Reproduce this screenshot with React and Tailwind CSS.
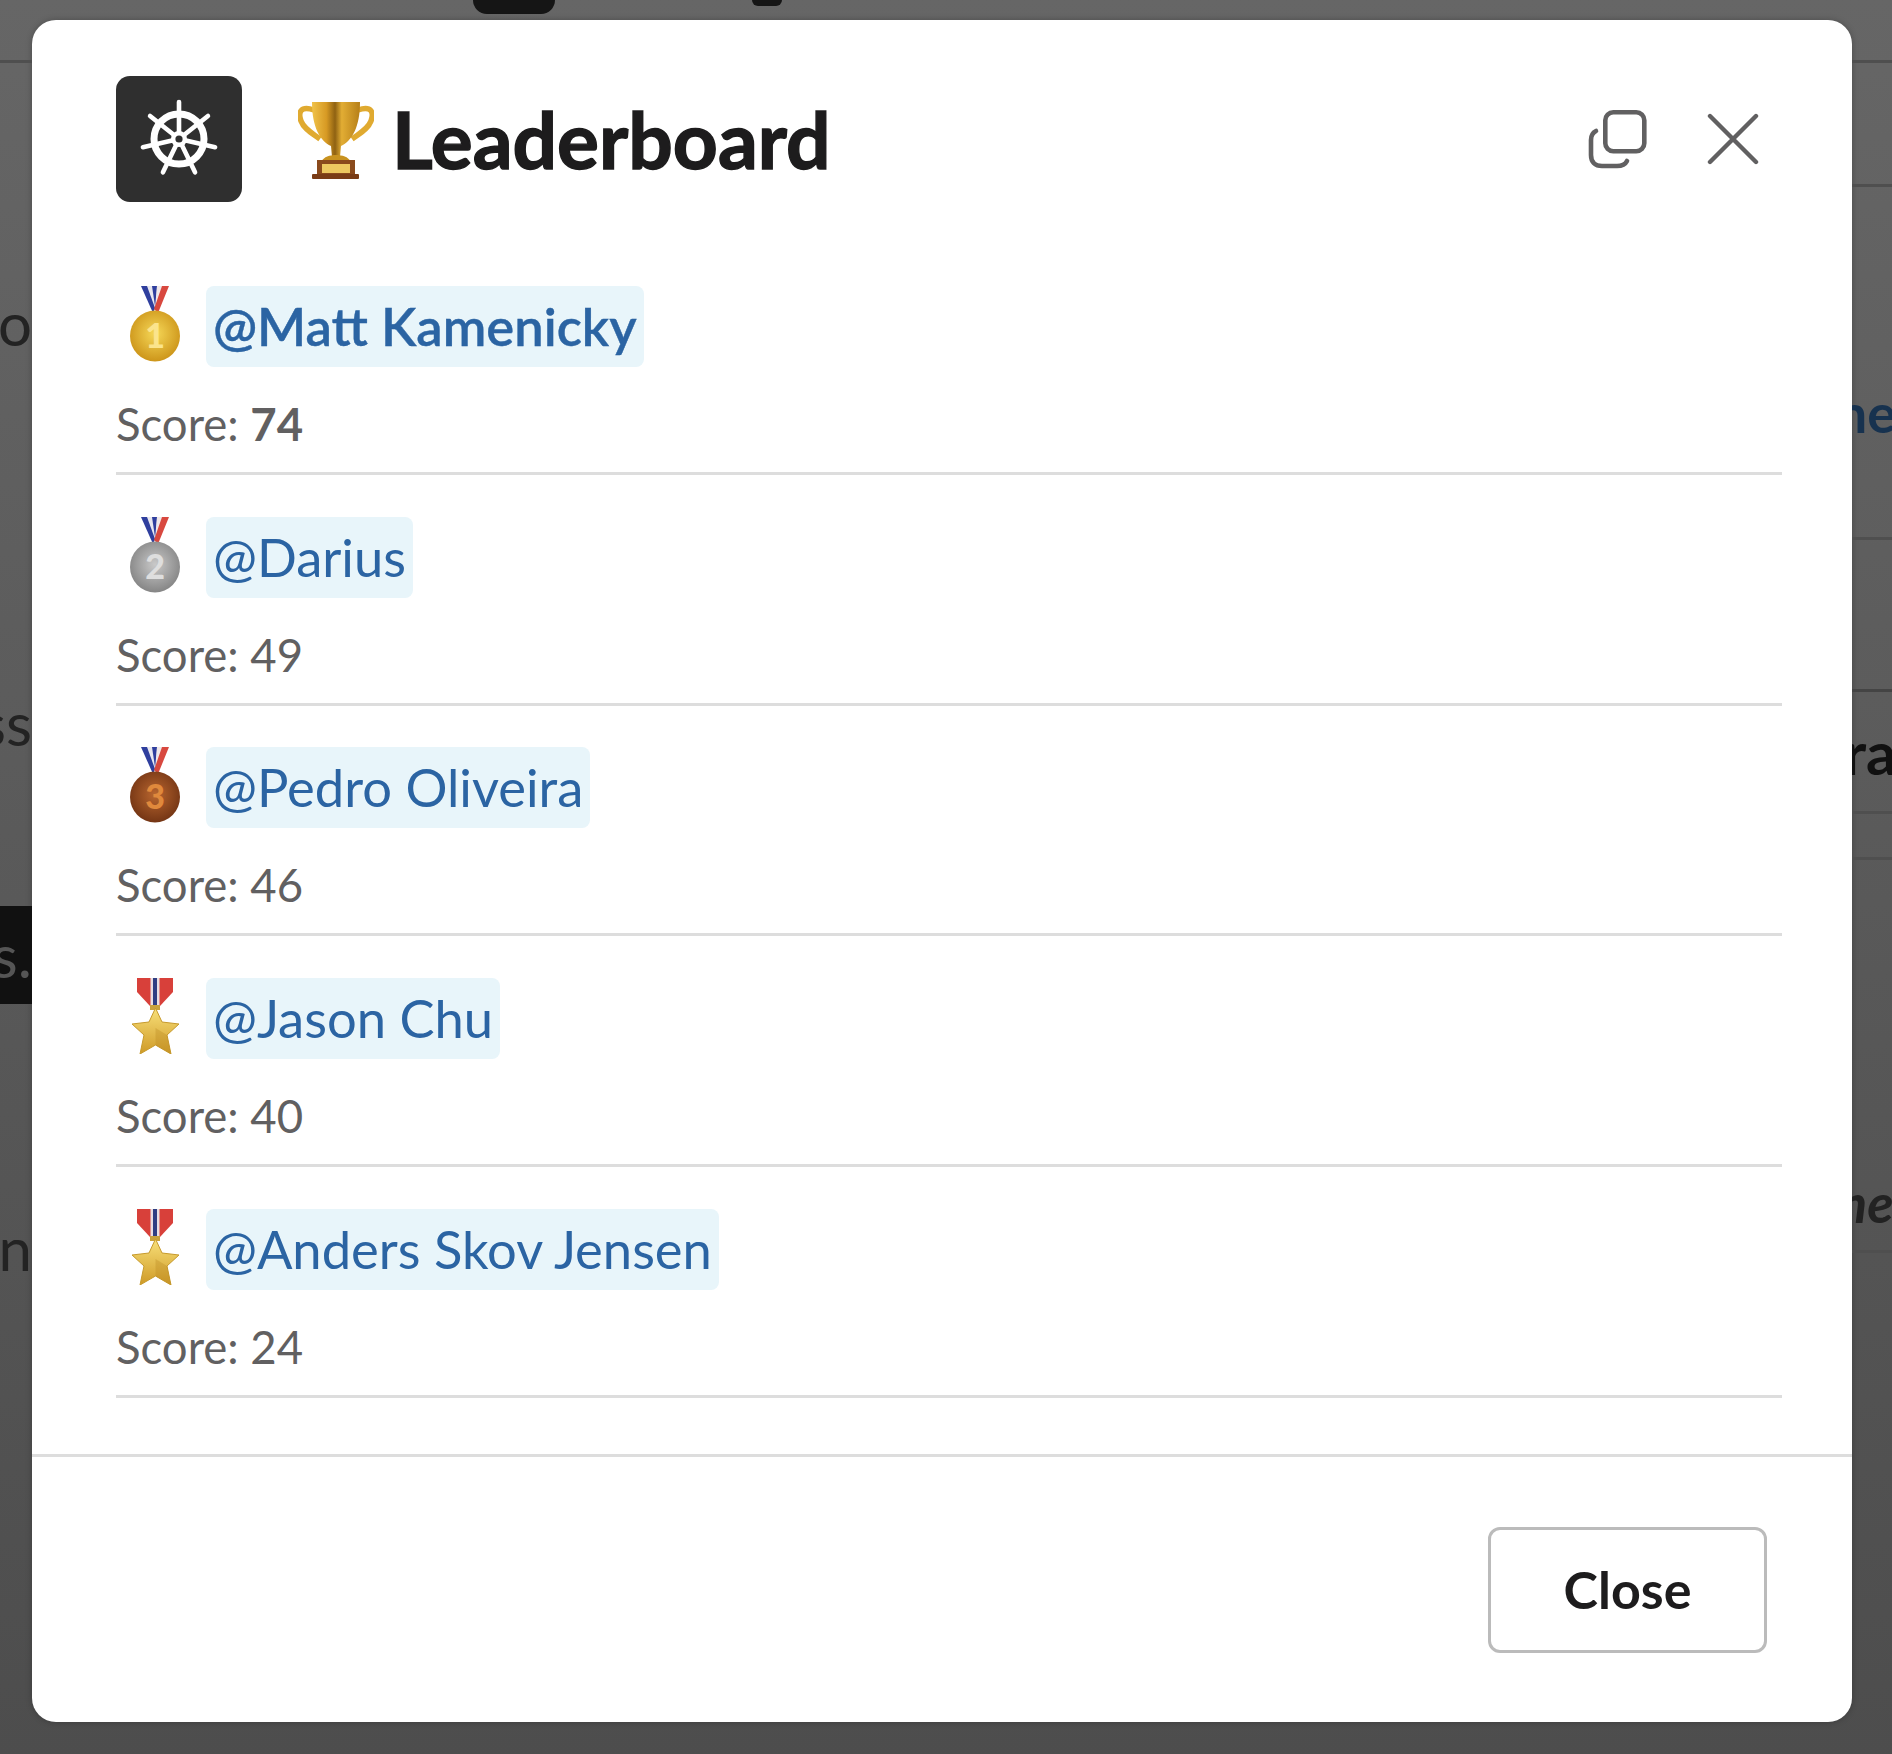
import React from 'react';

const players = [
  { name: 'Matt Kamenicky', score: 74, medal: 'gold', strong: true },
  { name: 'Darius', score: 49, medal: 'silver' },
  { name: 'Pedro Oliveira', score: 46, medal: 'bronze' },
  { name: 'Jason Chu', score: 40, medal: 'star' },
  { name: 'Anders Skov Jensen', score: 24, medal: 'star' },
];

const medalColors = {
  gold: { id: 'gold', hi: '#f6d858', lo: '#c98f14', num: '#fbe48c', label: '1' },
  silver: { id: 'silver', hi: '#c9c9c9', lo: '#7f7f7f', num: '#dedede', label: '2' },
  bronze: { id: 'bronze', hi: '#b9662f', lo: '#6e3112', num: '#e0893c', label: '3' },
};

function Medal({ type }) {
  const c = medalColors[type];
  return (
    <svg width="52" height="76" viewBox="0 0 52 76" className="shrink-0">
      <defs>
        <radialGradient id={c.id} cx="50%" cy="45%" r="60%">
          <stop offset="0%" stopColor={c.hi} />
          <stop offset="100%" stopColor={c.lo} />
        </radialGradient>
      </defs>
      <polygon points="12,0 19,0 27,20 24,27" fill="#2f3f9e" />
      <polygon points="18,0 23,0 28,18 26,22" fill="#e8e8f0" />
      <polygon points="23,0 28,0 27,20 26,20" fill="#2f3f9e" />
      <polygon points="28,0 33,0 28,20 26,22" fill="#f0e8e8" />
      <polygon points="33,0 40,0 29,27 25,23" fill="#d8483f" />
      <ellipse cx="26" cy="50" rx="25" ry="25.5" fill={`url(#${c.id})`} />
      <text x="26" y="62" textAnchor="middle" fontFamily="Lato, sans-serif" fontWeight="900" fontSize="34" fill={c.num}>
        {c.label}
      </text>
    </svg>
  );
}

function StarMedal({ id }) {
  return (
    <svg width="52" height="76" viewBox="0 0 52 76" className="shrink-0">
      <defs>
        <linearGradient id={id} x1="0" y1="0" x2="0" y2="1">
          <stop offset="0%" stopColor="#f8e07a" />
          <stop offset="100%" stopColor="#cf9a26" />
        </linearGradient>
      </defs>
      <polygon points="8,0 44,0 44,14 31,28 21,28 8,14" fill="#d8403a" />
      <rect x="21.5" y="0" width="9" height="28" fill="#e9dfe2" />
      <rect x="24" y="0" width="4" height="28" fill="#2f3f82" />
      <rect x="21" y="27" width="10" height="5" fill="#c9a23c" />
      <polygon
        points="26.5,30 33,44 50,46 38,57 42,76 26.5,67 11,76 15,57 3,46 20,44"
        fill={`url(#${id})`}
        stroke="#c79a2c"
        strokeWidth="1"
        strokeLinejoin="round"
      />
      <polygon points="26.5,50 38,57 42,76 26.5,67" fill="#b98a22" opacity="0.35" />
    </svg>
  );
}

function Wheel() {
  const spokes = [0, 51.43, 102.86, 154.29, 205.71, 257.14, 308.57];
  return (
    <svg width="82" height="82" viewBox="-41 -41 82 82">
      <circle r="25" fill="none" stroke="#fff" strokeWidth="7" />
      {spokes.map(a => (
        <g key={a} transform={`rotate(${a})`}>
          <line x1="0" y1="-6" x2="0" y2="-37" stroke="#fff" strokeWidth="4.6" strokeLinecap="round" />
        </g>
      ))}
      <circle r="8" fill="#fff" />
      <circle r="3.6" fill="#2f2f2f" />
    </svg>
  );
}

function Trophy() {
  return (
    <svg width="76" height="78" viewBox="0 0 76 78" className="shrink-0">
      <defs>
        <linearGradient id="cup" x1="0" y1="0" x2="1" y2="0">
          <stop offset="0%" stopColor="#f0c24a" />
          <stop offset="30%" stopColor="#d79a24" />
          <stop offset="48%" stopColor="#8f6212" />
          <stop offset="62%" stopColor="#e2ad34" />
          <stop offset="100%" stopColor="#b67f18" />
        </linearGradient>
      </defs>
      <path d="M16 9 C2 4 0 12 3 20 C6 28 14 32 22 38" fill="none" stroke="#e0aa30" strokeWidth="5.5" />
      <path d="M60 9 C74 4 76 12 73 20 C70 28 62 32 54 38" fill="none" stroke="#e0aa30" strokeWidth="5.5" />
      <path d="M14 1 H62 C62 26 54 40 43 45 L42 56 H34 L33 45 C22 40 14 26 14 1 Z" fill="url(#cup)" />
      <path d="M24 60 C27 52 49 52 52 60 Z" fill="#c8921f" />
      <rect x="19" y="59" width="38" height="15" fill="#8a4a1c" />
      <rect x="14" y="73" width="47" height="5" rx="1" fill="#7a3c16" />
      <rect x="24" y="63" width="28" height="9" fill="#edc860" />
    </svg>
  );
}

function CopyIcon() {
  return (
    <svg width="60" height="60" viewBox="0 0 60 60" fill="none" stroke="#616061" strokeWidth="4.6" strokeLinecap="round">
      <rect x="17.3" y="3.3" width="39" height="39" rx="8" />
      <path d="M8 22 C4 24 3 27 3 31 V46 C3 53 7 57 14 57 H29 C34 57 37 56 39 52" />
    </svg>
  );
}

function CloseIcon() {
  return (
    <svg width="52" height="52" viewBox="0 0 52 52" fill="none" stroke="#616061" strokeWidth="4.4" strokeLinecap="round" className="mt-[4px]">
      <path d="M3 3 L49 49 M49 3 L3 49" />
    </svg>
  );
}

function PlayerRow({ player, i }) {
  return (
    <div className="h-[189px] border-b-[3px] border-[#dddddd]">
      <div className="flex items-start gap-[25px] pl-[13px]">
        {player.medal === 'star' ? <StarMedal id={`star${i}`} /> : <Medal type={player.medal} />}
        <span className={`h-[81px] rounded-lg bg-[#e8f5fa] px-[7px] text-[52.5px] leading-[79px] text-[#2b64a3] ${player.strong ? 'font-semibold [-webkit-text-stroke:0.4px_#2b64a3]' : 'font-normal'}`}>
          @{player.name}
        </span>
      </div>
      <p className="mt-[27px] text-[45.5px] leading-[59px] text-[#616061]">
        Score: <span className={player.strong ? 'font-bold' : ''}>{player.score}</span>
      </p>
    </div>
  );
}

export default function App() {
  return (
    <div className="flex h-[1754px] w-[1892px] flex-col overflow-hidden bg-gradient-to-b from-[#666666] to-[#4d4d4d] font-['Lato',sans-serif]">
      {/* what shows of the page behind the dialog */}
      <div className="flex h-[20px] shrink-0 items-start pl-[473px]">
        <div className="h-[14px] w-[82px] rounded-b-[14px] bg-[#151515]" />
        <div className="ml-[197px] h-[6px] w-[30px] rounded-b-full bg-[#151515]" />
      </div>

      <div className="flex h-[1702px] shrink-0">
        <div className="flex w-[32px] shrink-0 flex-col items-end overflow-hidden text-[60px] leading-[70px] text-[#232323] blur-[0.6px]">
          <div className="mt-[40px] h-[3px] w-full shrink-0 bg-[#4f4f4f]" />
          <div className="mt-[225px] h-[70px] shrink-0 whitespace-nowrap">to</div>
          <div className="mt-[330px] h-[70px] shrink-0 whitespace-nowrap">ss</div>
          <div className="mt-[148px] flex h-[98px] w-full shrink-0 items-center justify-end whitespace-nowrap bg-[#111111] text-[#555555]">s.</div>
          <div className="mt-[209px] h-[70px] shrink-0 whitespace-nowrap">n</div>
        </div>

        <div className="w-[1820px] shrink-0 rounded-[24px] bg-white shadow-[0_0_6px_rgba(0,0,0,0.25)]">
          <header className="flex items-start pt-[56px] pl-[84px]">
            <div className="flex h-[126px] w-[126px] shrink-0 items-center justify-center rounded-[14px] bg-[#2f2f2f]">
              <Wheel />
            </div>
            <div className="mt-[25px] ml-[56px] flex items-start">
              <Trophy />
              <h1 className="-mt-[7px] ml-[18px] text-[78.5px] leading-[90px] font-bold text-[#1d1c1d] [-webkit-text-stroke:1.4px_#1d1c1d]">Leaderboard</h1>
            </div>
            <div className="mt-[33px] ml-auto flex items-start gap-[59px] pr-[93px]">
              <CopyIcon />
              <CloseIcon />
            </div>
          </header>

          <div className="mt-[84px] mr-[70px] ml-[84px] flex flex-col gap-[41.7px]">
            {players.map((p, i) => (
              <PlayerRow key={p.name} player={p} i={i} />
            ))}
          </div>

          <footer className="mt-[56px] flex justify-end border-t-[3px] border-[#dddddd] pt-[70px] pr-[85px]">
            <button className="h-[126px] w-[279px] rounded-[12px] border-[3px] border-[#bbbbbb] bg-white pb-[2px] text-[52px] font-bold text-[#1d1c1d]">
              Close
            </button>
          </footer>
        </div>

        <div className="flex w-[40px] shrink-0 flex-col overflow-hidden text-[54px] leading-[60px] blur-[0.6px]">
          <div className="mt-[40px] h-[3px] w-full shrink-0 bg-[#4f4f4f]" />
          <div className="mt-[121px] h-[3px] w-full shrink-0 bg-[#4f4f4f]" />
          <div className="mt-[196px] -ml-[30px] h-[60px] shrink-0 whitespace-nowrap font-bold text-[#17324f]">me</div>
          <div className="mt-[94px] h-[3px] w-full shrink-0 bg-[#4f4f4f]" />
          <div className="mt-[149px] h-[3px] w-full shrink-0 bg-[#444444]" />
          <div className="mt-[30px] -ml-[8px] h-[60px] shrink-0 text-[60px] whitespace-nowrap font-bold text-[#111111]">ra</div>
          <div className="mt-[29px] h-[3px] w-full shrink-0 bg-[#4f4f4f]" />
          <div className="mt-[43px] h-[3px] w-full shrink-0 bg-[#4f4f4f]" />
          <div className="mt-[313px] -ml-[14px] h-[60px] shrink-0 whitespace-nowrap font-bold text-[#222222] italic">ne</div>
          <div className="mt-[17px] h-[3px] w-full shrink-0 bg-[#4f4f4f]" />
        </div>
      </div>

      <div className="h-[32px] shrink-0" />
    </div>
  );
}
